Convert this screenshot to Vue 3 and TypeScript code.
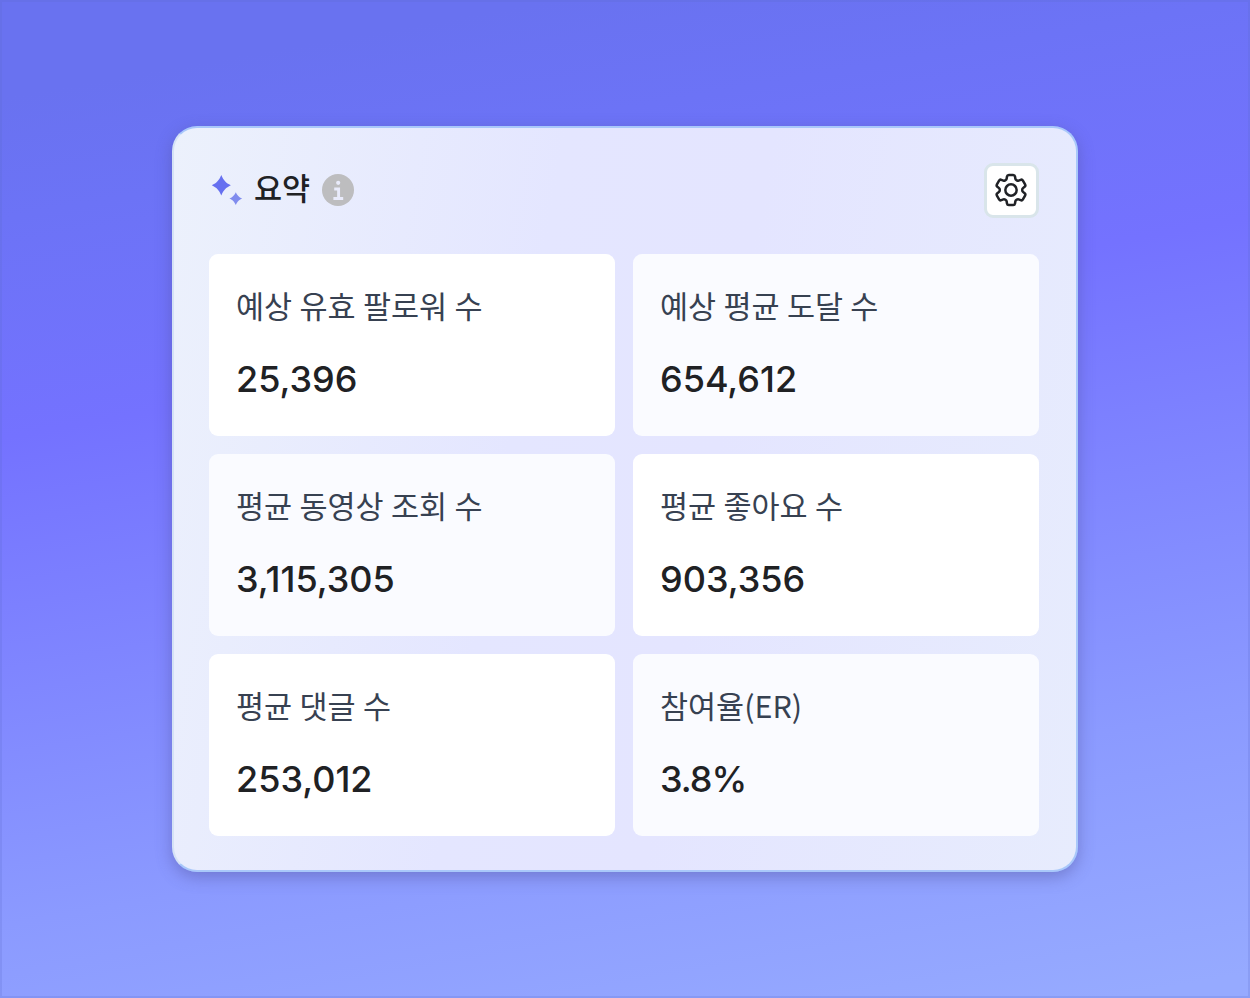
<script setup lang="ts">
type Metric = {
  label: string
  value: string
  tinted?: boolean
  percent?: boolean
}

const metrics: Metric[] = [
  { label: '예상 유효 팔로워 수', value: '25,396' },
  { label: '예상 평균 도달 수', value: '654,612', tinted: true },
  { label: '평균 동영상 조회 수', value: '3,115,305', tinted: true },
  { label: '평균 좋아요 수', value: '903,356' },
  { label: '평균 댓글 수', value: '253,012' },
  { label: '참여율(ER)', value: '3.8%', tinted: true, percent: true },
]
</script>

<template>
  <main class="page">
    <section class="summary">
      <header class="summary__header">
        <svg class="summary__sparkle" width="32" height="32" viewBox="0 0 32 32" aria-hidden="true">
          <path d="M10.3 1C12.8 6.8 14.8 8.7 19.8 11.3C14.8 13.9 12.8 15.8 10.3 21.6C7.8 15.8 5.8 13.9 0.8 11.3C5.8 8.7 7.8 6.8 10.3 1Z" fill="#6670f0" />
          <path d="M24.8 18.2C26.5 21.7 27.8 22.9 31.2 24.6C27.8 26.3 26.5 27.5 24.8 31C23.1 27.5 21.8 26.3 18.4 24.6C21.8 22.9 23.1 21.7 24.8 18.2Z" fill="#808cee" />
        </svg>
        <h1 class="summary__title">요약</h1>
        <svg class="summary__info" width="32" height="32" viewBox="0 0 32 32" aria-label="정보">
          <circle cx="16" cy="16" r="16" fill="#bdbdbf" />
          <circle cx="16.2" cy="8.8" r="2.1" fill="#e9ebfb" />
          <path d="M12.2 15H16.6V24.5M11.4 24.5H21.2" fill="none" stroke="#e9ebfb" stroke-width="2.9" />
        </svg>
        <button class="summary__settings" type="button" aria-label="설정">
          <svg class="summary__gear" width="40" height="40" viewBox="0 0 24 24" fill="none" stroke="#202226" stroke-width="1.5" stroke-linecap="round" stroke-linejoin="round">
            <path d="M9.594 3.94c.09-.542.56-.94 1.11-.94h2.593c.55 0 1.02.398 1.11.94l.213 1.281c.063.374.313.686.645.87.074.04.147.083.22.127.325.196.72.257 1.075.124l1.217-.456a1.125 1.125 0 0 1 1.37.49l1.296 2.247a1.125 1.125 0 0 1-.26 1.431l-1.003.827c-.293.241-.438.613-.43.992a7.723 7.723 0 0 1 0 .255c-.008.378.137.75.43.991l1.004.827c.424.35.534.955.26 1.43l-1.298 2.247a1.125 1.125 0 0 1-1.369.491l-1.217-.456c-.355-.133-.75-.072-1.076.124a6.47 6.47 0 0 1-.22.128c-.331.183-.581.495-.644.869l-.213 1.281c-.09.543-.56.94-1.11.94h-2.594c-.55 0-1.019-.398-1.11-.94l-.213-1.281c-.062-.374-.312-.686-.644-.87a6.52 6.52 0 0 1-.22-.127c-.325-.196-.72-.257-1.076-.124l-1.217.456a1.125 1.125 0 0 1-1.369-.49l-1.297-2.247a1.125 1.125 0 0 1 .26-1.431l1.004-.827c.292-.24.437-.613.43-.991a6.932 6.932 0 0 1 0-.255c.007-.38-.138-.751-.43-.992l-1.004-.827a1.125 1.125 0 0 1-.26-1.43l1.297-2.247a1.125 1.125 0 0 1 1.37-.491l1.216.456c.356.133.751.072 1.076-.124.072-.044.146-.086.22-.128.332-.183.582-.495.644-.869l.214-1.28Z" />
            <circle cx="12" cy="12" r="3.4" />
          </svg>
        </button>
      </header>

      <div class="summary__grid">
        <article v-for="metric in metrics" :key="metric.label" class="metric" :class="{ 'metric--tinted': metric.tinted }">
          <p class="metric__label">{{ metric.label }}</p>
          <p class="metric__value" :class="{ 'metric__value--percent': metric.percent }">{{ metric.value }}</p>
        </article>
      </div>
    </section>
  </main>
</template>

<style>
body {
  margin: 0;
}
</style>

<style scoped>
.page {
  box-sizing: border-box;
  height: 998px;
  padding: 126px 172px;
  background: linear-gradient(170deg, #6972f0 8%, #6c73f6 18%, #7472ff 36%, #8b9aff 76%, #96aaff 98%);
  box-shadow: inset 0 0 0 2px rgba(90, 105, 200, 0.2);
  font-family: 'Noto Sans CJK KR', sans-serif;
}

.summary {
  box-sizing: border-box;
  width: 906px;
  height: 746px;
  padding: 35px 37px 0 35px;
  border: 2px solid #a9c8fa;
  border-left-color: #d5e2f5;
  border-radius: 25px;
  background: linear-gradient(100deg, #ecf1fc 0%, #e4e6ff 38%, #e4e5ff 58%, #e7ecfd 100%);
  box-shadow: 0 5px 16px rgba(80, 80, 150, 0.45);
}

.summary__header {
  display: flex;
  align-items: center;
  height: 54px;
}

.summary__sparkle {
  margin: 0 11px 0 2px;
}

.summary__title {
  margin: 0 0 6px;
  color: #202124;
  font-size: 30.5px;
  font-weight: 500;
  line-height: 40px;
}

.summary__info {
  margin-left: 12px;
}

.summary__settings {
  display: flex;
  align-items: center;
  justify-content: center;
  box-sizing: border-box;
  width: 55px;
  height: 55px;
  margin-left: auto;
  padding: 0;
  border: 3px solid #d9e5ea;
  border-radius: 9px;
  background: #fff;
}

.summary__gear {
  flex: none;
  margin-right: 1px;
}

.summary__grid {
  display: grid;
  grid-template-columns: repeat(2, 1fr);
  gap: 18.5px 18px;
  margin-top: 37px;
}

.metric {
  box-sizing: border-box;
  height: 181.5px;
  padding: 29px 27px;
  border-radius: 9px;
  background: #fff;
}

.metric--tinted {
  background: #fafbff;
}

.metric__label {
  margin: 0;
  color: #374151;
  font-size: 30.5px;
  line-height: 44px;
  word-spacing: 0.5px;
}

.metric__value {
  margin: 30px 0 0;
  color: #202124;
  font-family: Inter, sans-serif;
  font-size: 36px;
  font-weight: 500;
  line-height: 44px;
}

.metric__value--percent {
  letter-spacing: -1px;
}
</style>
